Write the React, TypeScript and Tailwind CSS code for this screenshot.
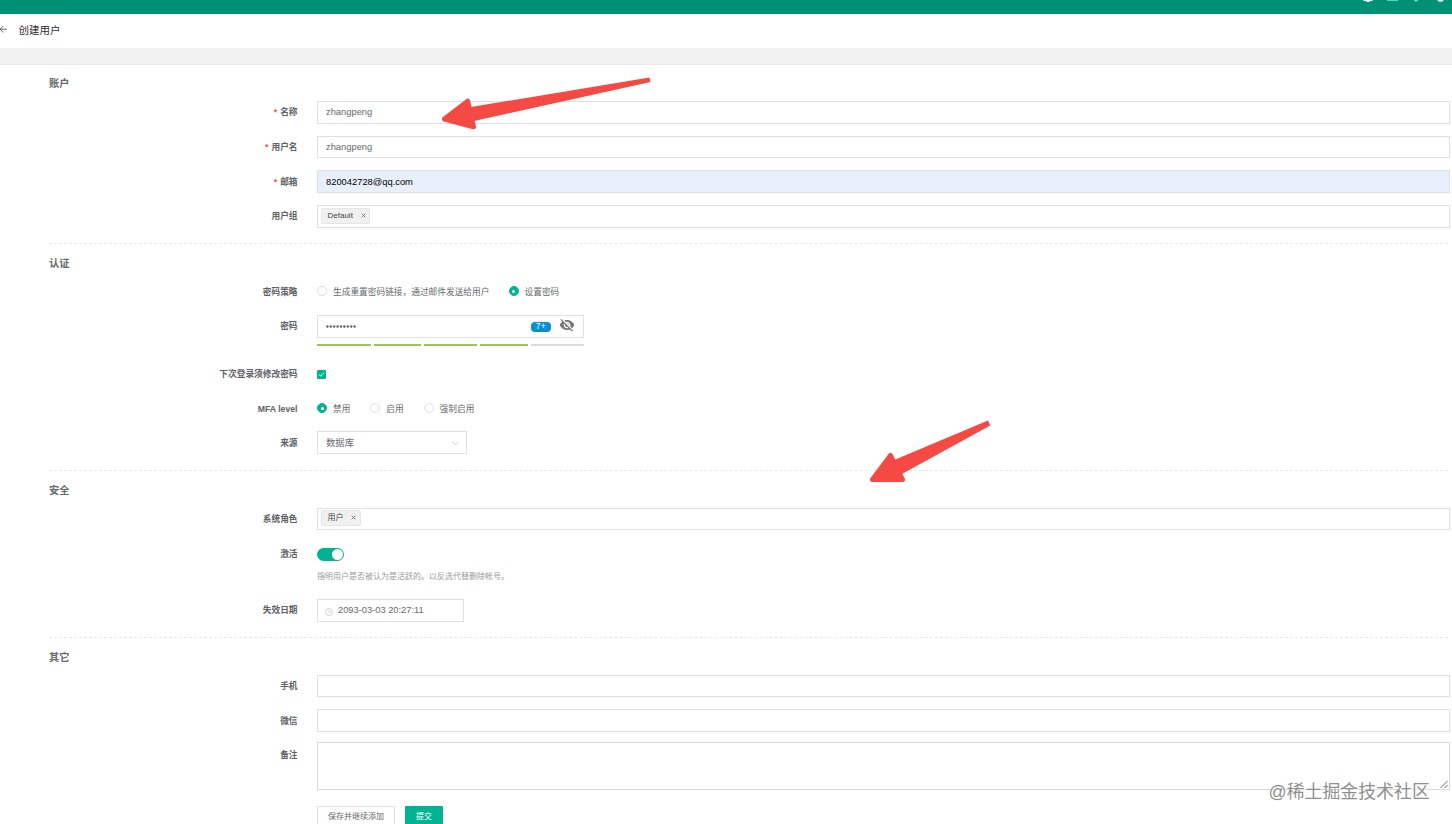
import type { ReactNode } from 'react';
import { MdVisibilityOff } from 'react-icons/md';

function Row({ label, required, className, labelClass = 'leading-[22px]', children }: { label?: string; required?: boolean; className: string; labelClass?: string; children: ReactNode }) {
  return (
    <div className={`flex items-start ${className}`}>
      <div className={`mr-[19.5px] w-[297.5px] shrink-0 whitespace-nowrap text-right text-[8.7px] font-bold text-[#606266] ${labelClass}`}>
        {required && <span className="mr-[3px] text-[#ed5565]">*</span>}
        {label}
      </div>
      <div className="min-w-0 flex-1">{children}</div>
    </div>
  );
}

function Field({ className, value }: { className: string; value?: string }) {
  return (
    <div className={`flex items-center border border-[#dfe1e4] px-2 text-[9.35px] leading-none ${className}`}>
      {value}
    </div>
  );
}

function Tag({ children, className }: { children: ReactNode; className: string }) {
  return (
    <span className={`flex h-4 items-center justify-between rounded-[2px] border border-[#e6e6e6] bg-[#f1f1f1] pb-px pl-[5.5px] text-[8px] leading-none text-[#444] ${className}`}>
      {children}
      <svg className="size-[5px]" viewBox="0 0 5 5" stroke="#666" strokeWidth="0.8">
        <path d="M.7.7l3.6 3.6M4.3.7L.7 4.3" />
      </svg>
    </span>
  );
}

function Radio({ label, checked, className }: { label: string; checked?: boolean; className: string }) {
  return (
    <span className={`flex items-center ${className}`}>
      <span className={`mr-[6px] flex size-[10px] shrink-0 items-center justify-center rounded-full border ${checked ? 'border-[#00b393] bg-[#00b393]' : 'border-[#dcdfe3] bg-white'}`}>
        {checked && <span className="size-[3px] rounded-full bg-white" />}
      </span>
      <span className="pt-[2px]">{label}</span>
    </span>
  );
}

function Title({ children, className }: { children: ReactNode; className: string }) {
  return <h2 className={`pl-[49px] text-[10.2px] font-bold text-[#676a6c] ${className}`}>{children}</h2>;
}

function Divider() {
  return <div className="ml-[49px] mr-[2px] h-0 border-t border-dashed border-[#e9e9e9]" />;
}

export default function App() {
  return (
    <div className="relative h-[824px] w-[1452px] overflow-hidden bg-white font-['Liberation_Sans','Noto_Sans_CJK_SC',sans-serif] text-[#676a6c]">
      <header className="h-[14px] bg-[#009175]">
        <svg className="ml-auto block" width="92" height="4" viewBox="0 0 92 4" fill="#c4f1e6">
          <path d="M3 0h10v.6l-3 .6-1 .8H7L6 1.200 3 .6z" fill="#effffb" />
          <path d="M27 0h11v1H27z" fill="#5fd3b8" />
          <path d="M54 0h4l-1 1.600h-2z" fill="#6fdcc2" />
          <path d="M77 0h7l-2 1.800h-3z" fill="#effffb" />
        </svg>
      </header>
      <div className="flex h-[34px] items-center pb-[2px] text-[10.5px] text-[#303133]">
        <svg className="mb-px mr-[11.5px] block h-[9px] w-[7px] shrink-0" viewBox="0 0 7 9" fill="none" stroke="#555" strokeWidth="0.9">
          <path d="M6.800 4.200H0M3.200 1L0 4.200l3.200 3.300" />
        </svg>
        <h1 className="leading-none">创建用户</h1>
      </div>
      <div className="h-[17px] border-b border-[#e7eaec] bg-[#f2f2f2]" />

      <form className="w-[1450px]">
        <Title className="h-9 leading-[38px]">账户</Title>
        <Row label="名称" required className="h-[35px]"><Field className="h-[23px]" value="zhangpeng" /></Row>
        <Row label="用户名" required className="h-[34px]"><Field className="h-[22px] pt-px" value="zhangpeng" /></Row>
        <Row label="邮箱" required className="h-[35px]" labelClass="leading-[24px]"><Field className="h-[23px] bg-[#e8f0fe] pt-[2px] text-black" value="820042728@qq.com" /></Row>
        <Row label="用户组" className="h-[38px]">
          <div className="h-[23px] border border-[#dfe1e4] pl-[3px] pt-[2px]"><Tag className="w-[49px] pr-[3px]">Default</Tag></div>
        </Row>

        <Divider />
        <Title className="h-9 leading-[39px]">认证</Title>
        <Row label="密码策略" className="h-[35px]" labelClass="leading-[24px]">
          <div className="flex h-[23px] items-center text-[8.7px]">
            <Radio label="生成重置密码链接，通过邮件发送给用户" className="w-[191.5px] whitespace-nowrap" />
            <Radio label="设置密码" checked className="" />
          </div>
        </Row>
        <Row label="密码" className="h-12">
          <div className="w-[267px]">
            <div className="flex h-[23px] items-center border border-[#dfe1e4] px-2">
              <svg className="mb-px h-[3px] w-[30px]" viewBox="0 0 30 3" fill="#606266">
                {[0, 1, 2, 3, 4, 5, 6, 7, 8].map((n) => <circle key={n} cx={1.4 + n * 3.4} cy="1.5" r="1.2" />)}
              </svg>
              <span className="ml-auto mr-2 flex h-[10px] w-5 items-center justify-center rounded-[4px] bg-[#0b8fd3] text-[8.500px] leading-none tracking-[0.5px] text-white">7+</span>
              <MdVisibilityOff className="mb-[3px] size-4 text-[#777]" />
            </div>
            <div className="mt-[6px] flex h-[2px] gap-[3px]">
              <span className="w-[54px] bg-[#9cc653]" />
              <span className="w-[47px] bg-[#9cc653]" />
              <span className="w-[53px] bg-[#9cc653]" />
              <span className="w-[48px] bg-[#9cc653]" />
              <span className="flex-1 bg-[#dcdcdc]" />
            </div>
          </div>
        </Row>
        <Row label="下次登录须修改密码" className="h-[34px]">
          <div className="flex h-[22px] items-center">
            <span className="flex size-[9px] items-center justify-center rounded-[1px] bg-[#00b393]">
              <svg className="size-[7px]" viewBox="0 0 7 7" fill="none" stroke="white" strokeWidth="1"><path d="M1 3.500l1.700 1.700L6 1.800" /></svg>
            </span>
          </div>
        </Row>
        <Row label="MFA level" className="h-[34px]" labelClass="leading-[24px]">
          <div className="flex h-[23px] items-center text-[8.7px]">
            <Radio label="禁用" checked className="w-[53.3px]" />
            <Radio label="启用" className="w-[53.3px]" />
            <Radio label="强制启用" className="" />
          </div>
        </Row>
        <Row label="来源" className="h-[39px]" labelClass="leading-[24px]">
          <div className="flex h-[23px] w-[150px] items-center justify-between border border-[#dfe1e4] pl-2 pr-[7px] text-[9.35px]">
            <span className="pt-[2px]">数据库</span>
            <svg className="mt-px h-[5px] w-[7px]" viewBox="0 0 7 5" fill="none" stroke="#c0c4cc" strokeWidth="0.8"><path d="M.5.700l3 3.300 3-3.300" /></svg>
          </div>
        </Row>

        <Divider />
        <Title className="h-[37px] leading-[39px]">安全</Title>
        <Row label="系统角色" className="h-[35px]">
          <div className="h-[22px] border border-[#dfe1e4] pl-[3px] pt-px"><Tag className="w-10 pr-1">用户</Tag></div>
        </Row>
        <Row label="激活" className="h-14">
          <div className="pt-[5px]">
            <span className="flex h-[13px] w-[27px] items-center justify-end rounded-full bg-[#00b393] pr-px">
              <span className="size-[11px] rounded-full bg-white" />
            </span>
            <p className="mt-[10px] text-[8px] leading-[12px] text-[#9b9b9b]">指明用户是否被认为是活跃的。以反选代替删除帐号。</p>
          </div>
        </Row>
        <Row label="失效日期" className="h-[38px]">
          <div className="flex h-[23px] w-[147px] items-center border border-[#dfe1e4] pl-[7px] text-[9.300px] leading-none">
            <svg className="mr-[5px] mt-[2px] size-2" viewBox="0 0 8 8" fill="none" stroke="#c0c4cc" strokeWidth="0.7"><circle cx="4" cy="4" r="3.500" /><path d="M4 1.800V4.300h2" /></svg>
            <span className="pt-px">2093-03-03 20:27:11</span>
          </div>
        </Row>

        <Divider />
        <Title className="h-[37px] leading-[39px]">其它</Title>
        <Row label="手机" className="h-[34px]"><Field className="h-[22px]" /></Row>
        <Row label="微信" className="h-[33px]" labelClass="leading-[24px]"><Field className="h-[23px]" /></Row>
        <Row label="备注" className="h-16" labelClass="pt-[2px] leading-[22px]">
          <div className="flex h-12 items-end justify-end border border-[#d8dadd]">
            <svg className="size-[9px]" viewBox="0 0 9 9" stroke="#555" strokeWidth="0.9"><path d="M.5 8L7.500 1M4.500 8l3-3" /></svg>
          </div>
        </Row>
        <Row className="h-[23px]">
          <div className="flex gap-[10px] text-[8px] leading-[20px]">
            <button type="button" className="h-[23px] w-[78px] rounded-[1px] border border-[#dcdfe3] pb-px leading-[18px]">保存并继续添加</button>
            <button type="button" className="h-[23px] w-[38px] rounded-[1px] bg-[#00b393] pb-px text-white">提交</button>
          </div>
        </Row>
      </form>

      <svg className="pointer-events-none absolute left-0 top-0" width="1452" height="824" fill="#f44a43" stroke="#f44a43" strokeLinejoin="round">
        <path strokeWidth="5" d="M444.500 119L467.700 101.200 473.500 126.800z" />
        <path stroke="none" d="M471 107L649.500 77.500 650.500 82 474 121z" />
        <path strokeWidth="5" d="M872.500 479.500L890.500 455.500 902.500 479.500z" />
        <path stroke="none" d="M893 460.500L988 420.500 990.300 425.500 901 474.500z" />
      </svg>
      <div className="absolute left-[1268.500px] top-[780px] whitespace-nowrap text-[17.9px] leading-[24px] text-[#8f8f8f] [text-shadow:1px_1px_0_white]">@稀土掘金技术社区</div>
    </div>
  );
}
